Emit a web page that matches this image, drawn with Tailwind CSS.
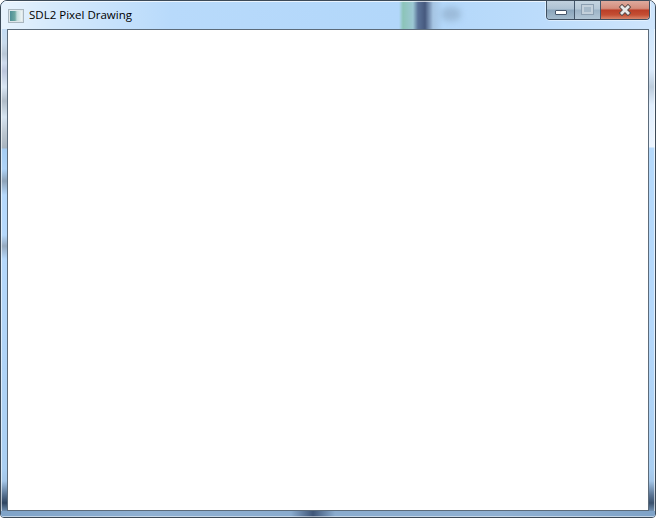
<!DOCTYPE html>
<html lang="en">
<head>
  <meta charset="UTF-8" />
  <title>SDL2 Pixel Drawing</title>
  <script src="https://cdn.jsdelivr.net/npm/@tailwindcss/browser@4"></script>
</head>
<body class="bg-white overflow-hidden">

<div class="relative w-[656px] h-[518px] overflow-hidden rounded-t-[7px] rounded-b-[4px] border border-[#3c4a58] bg-[#b5d8fb]">

  <!-- glass behind the frame: caption -->
  <div class="absolute left-0 top-0 w-[654px] h-[28px] border-t border-white/70 bg-[linear-gradient(to_right,#e8f3fd_0px,#d6eafc_50px,#b8dafb_170px,#b2d7fa_398px,#8cc4b8_402px,#9cc8d4_412px,#5a7298_417px,#46597e_424px,#a5c4e2_432px,#b4d8fa_442px,#bcdcfb_540px,#cfe5fc_654px)]"></div>
  <div class="absolute left-[440px] top-[6px] w-[20px] h-[14px] rounded-full bg-[#8ca8c4]/60 blur-[3px]"></div>

  <!-- glass behind the frame: left edge -->
  <div class="absolute left-0 top-[28px] w-[6px] h-[488px] border-l border-white/60 bg-[linear-gradient(to_bottom,#c4dcf4_0px,#c9dbec_14px,#b9c7d6_25px,#cfdcee_34px,#bcc6dc_42px,#d9e6f4_58px,#b0bcc8_72px,#d6e4f1_88px,#bcc7d1_104px,#a8b4bf_119px,#a5cdf3_120px,#aed3f7_140px,#8ea3b8_152px,#b5d8fb_166px,#b5d8fb_206px,#96aac0_217px,#b5d8fb_230px,#aacff2_440px,#a4c6e8_452px,#55708f_466px,#2f4560_474px,#7fa0c2_484px,#a7c9ec_488px)]"></div>

  <!-- glass behind the frame: right edge -->
  <div class="absolute right-0 top-[28px] w-[6px] h-[488px] border-r border-white/60 bg-[linear-gradient(to_bottom,#cfe6fc_0px,#dcecfd_40px,#bcccdc_58px,#e0eefd_76px,#ecf5ff_118px,#b5d9fb_119px,#b5d8fb_300px,#aacff2_440px,#a4c6e8_452px,#5a7493_466px,#39506c_474px,#7fa0c2_484px,#a7c9ec_488px)]"></div>

  <!-- glass behind the frame: bottom edge -->
  <div class="absolute left-0 bottom-0 w-[654px] h-[6px] border-b border-white/50 bg-[linear-gradient(to_right,#7fa3c8_0px,#8fb0d2_150px,#8aaccf_290px,#3f5678_312px,#8aaccf_334px,#8fb0d2_500px,#7fa3c8_654px)]"></div>

  <!-- caption -->
  <div class="relative flex items-start h-[28px] pl-[7px] pr-[5px]">
    <div class="mt-[7px] flex items-center gap-[5px]">
      <div class="w-[16px] h-[14px] border border-[#a9b6bf] bg-[#dfe7ea] p-[1px]">
        <div class="h-full bg-[linear-gradient(to_right,#4d8f96_0px,#6fa8a2_5px,#c4dcdc_7px,#eef4f5_12px)]"></div>
      </div>
      <span class="-mt-[1px] text-[11.5px] leading-[16px] text-black [font-family:'Open_Sans',sans-serif]">SDL2 Pixel Drawing</span>
    </div>
    <div class="ml-auto -mt-[1px] flex h-[20px] border border-t-0 border-[#3f4f60] rounded-b-[4px] overflow-hidden shadow-[0_0_0_1px_rgba(255,255,255,0.45)]">
      <div class="w-[28px] flex items-center justify-center border-r border-[#44566a] bg-[linear-gradient(to_bottom,#c3d2df_0%,#aec2d3_46%,#8ba5bb_54%,#a3bacc_100%)]">
        <div class="w-[12px] h-[5px] mt-[5px] bg-white border border-[#46566a] rounded-[1px]"></div>
      </div>
      <div class="w-[26px] flex items-center justify-center border-r border-[#44566a] bg-[linear-gradient(to_bottom,#c6d5e1_0%,#b6c8d7_46%,#9db4c7_54%,#b2c6d6_100%)]">
        <div class="w-[11px] h-[9px] border-2 border-[#c3d0db] outline outline-1 outline-[#8c9fb1] bg-[#a6b9c9]"></div>
      </div>
      <div class="w-[48px] flex items-center justify-center bg-[linear-gradient(to_bottom,#dfaea2_0%,#d48d7c_44%,#bb3f28_54%,#c44e33_78%,#d8866c_100%)]">
        <svg width="14" height="12" viewBox="0 0 14 12"><path d="M4 3 L10 9 M10 3 L4 9" stroke="#5a4a48" stroke-width="4.6" stroke-linecap="square"/><path d="M4 3 L10 9 M10 3 L4 9" stroke="#e8e8e8" stroke-width="2.8" stroke-linecap="square"/></svg>
      </div>
    </div>
  </div>

  <!-- client area -->
  <div class="relative ml-[6px] w-[642px] h-[482px] border border-[#5c6b7a] bg-white"></div>
</div>

</body>
</html>
